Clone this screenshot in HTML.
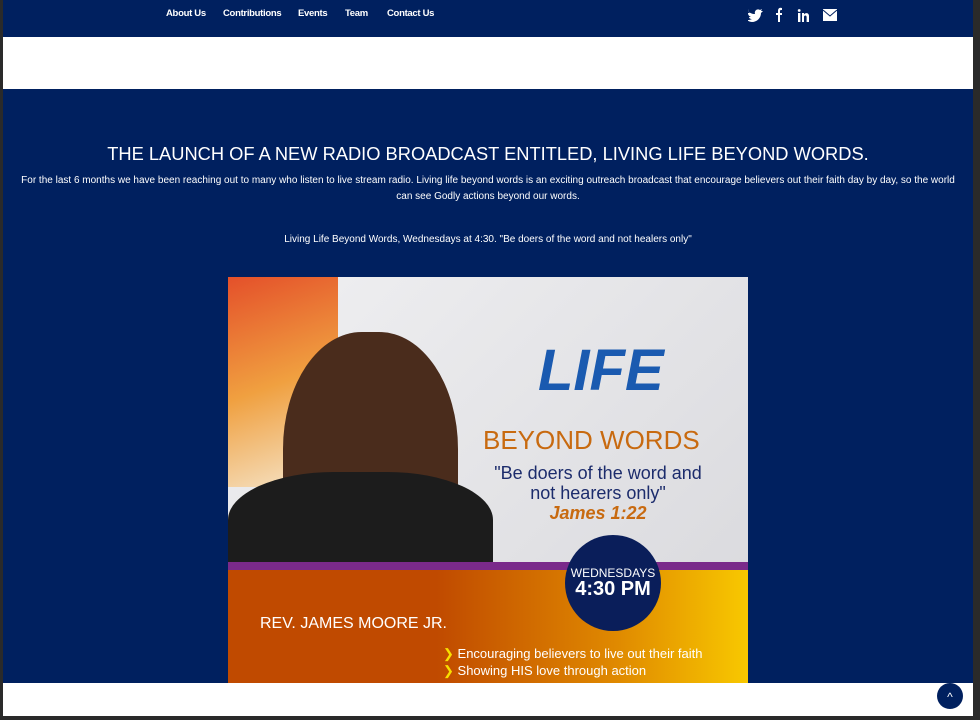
<!DOCTYPE html>
<html><head><meta charset="utf-8"><style>
body{margin:0;width:980px;height:720px;background:#2a2a2a;overflow:hidden;font-family:"Liberation Sans",sans-serif;position:relative}
.nav{position:absolute;left:3px;top:0;width:970px;height:37px;background:#00205f}
.nav a{position:absolute;top:8px;color:#fff;font-size:9.5px;letter-spacing:-0.3px;text-decoration:none;font-weight:bold}
.w1{position:absolute;left:3px;top:37px;width:970px;height:52px;background:#fff}
.main{position:absolute;left:3px;top:89px;width:970px;height:594px;background:#00205f;color:#fff;text-align:center}
.w2{position:absolute;left:3px;top:683px;width:970px;height:33px;background:#fff}
h1{position:absolute;top:54px;left:0;width:970px;margin:0;font-weight:normal;font-size:18.3px}
.p{position:absolute;font-size:10px;line-height:16px}
.img{position:absolute;left:225px;top:188px;width:520px;height:406px;overflow:hidden;background:linear-gradient(135deg,#f0f0f2,#d8d8dc)}
.top{position:absolute;left:937px;top:683px;width:26px;height:26px;border-radius:50%;background:#00205f;color:#fff;font-size:12px;text-align:center;line-height:28px}
</style></head><body>
<div class="nav">
<a style="left:163px">About Us</a><a style="left:220px">Contributions</a><a style="left:295px">Events</a><a style="left:342px">Team</a><a style="left:384px">Contact Us</a>
<svg style="position:absolute;left:745px;top:7px" width="90" height="16" viewBox="0 0 90 16" fill="#fff">
<path d="M0 4c2 2 4 3 7 3-1-3 2-6 5-4l2-1-1 2 2 0-2 2c0 5-4 9-9 9-2 0-4-1-5-2 2 0 3 0 5-1-2 0-3-1-3-2h2c-2-1-3-2-3-4 1 0 1 0 2 0-2-1-2-3-1-4z"/>
<path d="M30 15V8h-2V6h2V4c0-2 1-4 4-3v2h-1c-1 0-1 1-1 1v2h2l0 2h-2v7z"/>
<rect x="50" y="6" width="2.4" height="9"/><circle cx="51.2" cy="3.5" r="1.4"/><path d="M54 6h2v1.5c1-2 5-2 5 1.5v6h-2.4V10c0-2-2.6-2-2.6 0v5H54z"/>
<path d="M75 2h14v12H75z"/><path d="M75 3l7 6 7-6" stroke="#00205f" fill="none"/>
</svg></div>
<div class="w1"></div>
<div class="main">
<h1>THE LAUNCH OF A NEW RADIO BROADCAST ENTITLED, LIVING LIFE BEYOND WORDS.</h1>
<div class="p" style="top:84px;left:15px;width:940px">For the last 6 months we have been reaching out to many who listen to live stream radio. Living life beyond words is an exciting outreach broadcast that encourage believers out their faith day by day, so the world can see Godly actions beyond our words.</div>
<div class="p" style="top:143px;left:0;width:970px">Living Life Beyond Words, Wednesdays at 4:30. "Be doers of the word and not healers only"</div>
<div class="img">
<div style="position:absolute;left:0;top:0;width:110px;height:210px;background:linear-gradient(160deg,#e4502a,#f0a040 50%,#f5e8d0)"></div>
<div style="position:absolute;left:55px;top:55px;width:175px;height:260px;border-radius:45% 45% 20% 20%;background:#4a2c1c"></div>
<div style="position:absolute;left:0;top:195px;width:265px;height:120px;background:#1c1c1c;border-radius:40% 40% 0 0"></div>
<div style="position:absolute;left:0;top:290px;width:520px;height:116px;background:linear-gradient(90deg,#c04a00 40%,#e08a00 75%,#f8c800)"></div>
<div style="position:absolute;left:0;top:285px;width:520px;height:8px;background:#7a2a8a"></div>
<div style="position:absolute;left:310px;top:60px;font-size:58px;color:#1a5ab0;font-weight:bold;font-style:italic">LIFE</div>
<div style="position:absolute;left:255px;top:148px;font-size:26px;color:#c86a10">BEYOND WORDS</div>
<div style="position:absolute;left:255px;top:186px;width:230px;font-size:18px;color:#1c2c6c;text-align:center;line-height:20px">"Be doers of the word and not hearers only"<br><i style="color:#c86a10;font-weight:bold">James 1:22</i></div>
<div style="position:absolute;left:337px;top:258px;width:96px;height:96px;border-radius:50%;background:#0a1e5a;color:#fff;font-size:12px;line-height:16px"><div style="margin-top:30px">WEDNESDAYS</div><b style="font-size:20px">4:30 PM</b></div>
<div style="position:absolute;left:32px;top:338px;font-size:16px;color:#fff">REV. JAMES MOORE JR.</div>
<div style="position:absolute;left:215px;top:368px;font-size:13px;color:#fff;text-align:left;line-height:17px"><span style="color:#f8e000">❯</span> Encouraging believers to live out their faith<br><span style="color:#f8e000">❯</span> Showing HIS love through action</div>
</div>
</div>
<div class="w2"></div>
<div class="top">^</div>
</body></html>
